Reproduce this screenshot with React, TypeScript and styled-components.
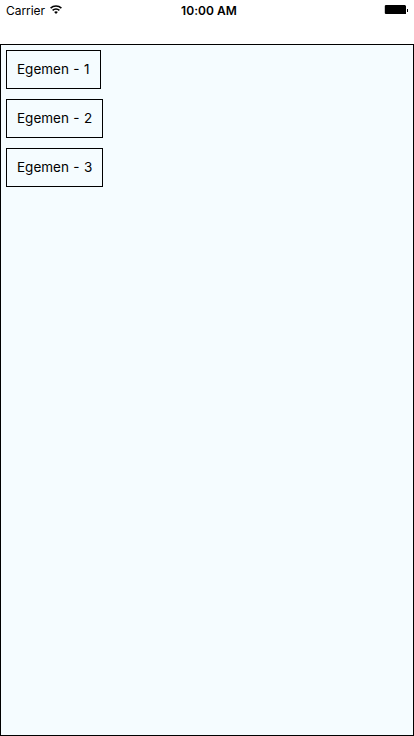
import React from "react";
import styled, { createGlobalStyle } from "styled-components";

const GlobalStyle = createGlobalStyle`
  * { box-sizing: border-box; }
  body { margin: 0; background: #fff; font-family: Inter, sans-serif; color: #000; }
`;

const Screen = styled.div`
  display: flex;
  flex-direction: column;
  width: 414px;
  height: 736px;
  overflow: hidden;
`;

const StatusBar = styled.header`
  display: grid;
  grid-template-columns: 1fr auto 1fr;
  align-items: start;
  height: 20px;
  margin-bottom: 24px;
  padding: 0 5px 0 6px;
  font-size: 12px;
  line-height: 22px;
`;

const Carrier = styled.div`
  display: flex;
  align-items: flex-start;
  gap: 5px;
  letter-spacing: -0.05px;
`;

const Clock = styled.div`
  font-weight: 600;
  letter-spacing: 0.05px;
  padding-left: 3px;
`;

const Wifi = styled.svg`
  display: block;
  margin-top: 5px;
`;

const Battery = styled.svg`
  justify-self: end;
  display: block;
  margin-top: 5px;
`;

const Content = styled.main`
  flex: 1;
  display: flex;
  flex-direction: column;
  align-items: flex-start;
  gap: 10px;
  padding: 5px;
  border: 1px solid #000;
  background: #f5fcff;
`;

const Item = styled.div<{ $width: number }>`
  width: ${(p) => p.$width}px;
  height: 39px;
  padding: 0 10px;
  border: 1px solid #000;
  font-size: 13.5px;
  word-spacing: 0.6px;
  line-height: 37px;
  white-space: nowrap;
`;

const items = [
  { label: "Egemen - 1", width: 95 },
  { label: "Egemen - 2", width: 97 },
  { label: "Egemen - 3", width: 97 },
];

export default function App() {
  return (
    <Screen>
      <GlobalStyle />
      <StatusBar>
        <Carrier>
          <span>Carrier</span>
          <Wifi width="12" height="9" viewBox="0 0 12 9" fill="none" stroke="#000" strokeWidth="1.5">
            <path d="M.6 3.1a7.7 7.7 0 0 1 10.8 0M2.6 5.4a4.8 4.8 0 0 1 6.8 0" />
            <path d="M6 9 4.1 7.1a2.7 2.7 0 0 1 3.8 0Z" fill="#000" stroke="none" />
          </Wifi>
        </Carrier>
        <Clock>10:00 AM</Clock>
        <Battery width="25" height="10" viewBox="0 0 25 10">
          <path d="M1.6 0H21L22 1v8H1.6L.8 8.2V.8Z" />
          <rect x="23" y="4" width="1" height="3" />
        </Battery>
      </StatusBar>
      <Content>
        {items.map((item) => (
          <Item key={item.label} $width={item.width}>{item.label}</Item>
        ))}
      </Content>
    </Screen>
  );
}
